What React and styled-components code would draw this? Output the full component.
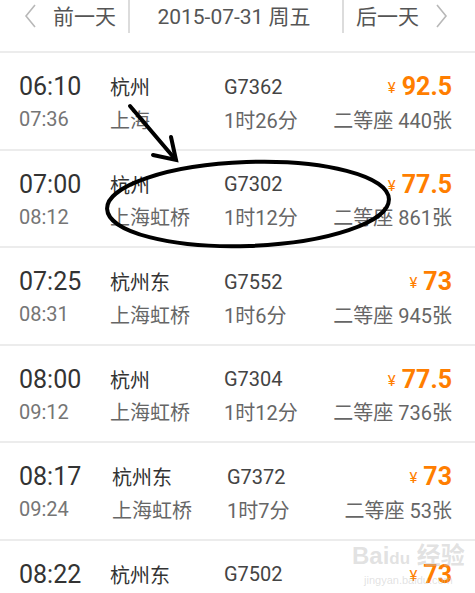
import React from "react";
import styled, { createGlobalStyle } from "styled-components";

const trains = [
  { dep: "06:10", arr: "07:36", from: "杭州", to: "上海", no: "G7362", dur: "1时26分", price: "92.5", seats: "440张" },
  { dep: "07:00", arr: "08:12", from: "杭州", to: "上海虹桥", no: "G7302", dur: "1时12分", price: "77.5", seats: "861张" },
  { dep: "07:25", arr: "08:31", from: "杭州东", to: "上海虹桥", no: "G7552", dur: "1时6分", price: "73", seats: "945张" },
  { dep: "08:00", arr: "09:12", from: "杭州", to: "上海虹桥", no: "G7304", dur: "1时12分", price: "77.5", seats: "736张" },
  { dep: "08:17", arr: "09:24", from: "杭州东", to: "上海虹桥", no: "G7372", dur: "1时7分", price: "73", seats: "53张", shift: true },
  { dep: "08:22", arr: "09:29", from: "杭州东", to: "上海虹桥", no: "G7502", dur: "1时7分", price: "73", seats: "60张" },
];

export default function App() {
  return (
    <Page>
      <GlobalStyle />
      <Header>
        <NavBar>
          <NavButton>
            <Chevron viewBox="0 0 12 24">
              <path d="M11 1 L2 12 L11 23" />
            </Chevron>
            前一天
          </NavButton>
          <DateLabel>2015-07-31 周五</DateLabel>
          <NavButton $right>
            后一天
            <Chevron viewBox="0 0 12 24">
              <path d="M1 1 L10 12 L1 23" />
            </Chevron>
          </NavButton>
        </NavBar>
      </Header>

      {trains.map((t) => (
        <Row key={t.no} $shift={t.shift}>
          <Time>{t.dep}</Time>
          <Station>{t.from}</Station>
          <TrainNo>{t.no}</TrainNo>
          <Price>
            <Yen>¥</Yen>
            {t.price}
          </Price>
          <SubTime>{t.arr}</SubTime>
          <SubText>{t.to}</SubText>
          <SubText>{t.dur}</SubText>
          <Seats>二等座 {t.seats}</Seats>
        </Row>
      ))}

      <Annotation viewBox="0 0 475 593">
        <line x1="130" y1="106" x2="175" y2="159" />
        <polyline points="171,137 176,160 153,155" />
        <ellipse cx="248" cy="204" rx="141" ry="42" transform="rotate(-2 248 204)" />
      </Annotation>

      <Watermark>
        <Logo>
          Bai<Paw>du</Paw> 经验
        </Logo>
        <Site>jingyan.baidu.com</Site>
      </Watermark>
    </Page>
  );
}

const GlobalStyle = createGlobalStyle`
  html, body {
    margin: 0;
    padding: 0;
    background: #fff;
  }
  body {
    font-family: Roboto, "Noto Sans CJK SC", sans-serif;
  }
`;

const Page = styled.div`
  position: relative;
  width: 475px;
  height: 593px;
  overflow: hidden;
  background: #fff;
`;

const Header = styled.div`
  height: 51px;
  border-bottom: 2px solid #ececec;
`;

const NavBar = styled.div`
  display: grid;
  grid-template-columns: 128px 214px 133px;
  height: 33px;
`;

const NavButton = styled.div`
  display: flex;
  align-items: center;
  gap: 17px;
  padding-left: ${(p) => (p.$right ? "12px" : "24px")};
  border-left: ${(p) => (p.$right ? "2px solid #dcdcdc" : "none")};
  font-size: 21px;
  color: #555;
  line-height: 30px;
`;

const Chevron = styled.svg`
  width: 12px;
  height: 24px;
  margin-top: -2px;
  fill: none;
  stroke: #b8b8b8;
  stroke-width: 1.6;
`;

const DateLabel = styled.div`
  display: flex;
  align-items: center;
  justify-content: center;
  border-left: 2px solid #dcdcdc;
  font-size: 21px;
  color: #555;
  line-height: 30px;
  padding-right: 4px;
`;

const Row = styled.div`
  display: grid;
  grid-template-columns: ${(p) => (p.$shift ? "93px 115px" : "91px 114px")} 1fr auto;
  grid-template-rows: 31px 34px;
  align-items: center;
  padding: 18px 23px 0 19px;
  box-sizing: border-box;
  height: 97.6px;
  border-bottom: 2px solid #ececec;
`;

const Time = styled.div`
  font-size: 25px;
  color: #333;
`;

const Station = styled.div`
  font-size: 20px;
  color: #333;
`;

const TrainNo = styled.div`
  font-size: 20px;
  color: #444;
`;

const Price = styled.div`
  justify-self: end;
  font-size: 25px;
  font-weight: bold;
  color: #ff7e00;
`;

const Yen = styled.span`
  font-size: 15px;
  font-weight: normal;
  margin-right: 6px;
  vertical-align: 2px;
`;

const SubTime = styled.div`
  font-size: 20px;
  color: #757575;
`;

const SubText = styled.div`
  font-size: 20px;
  color: #666;
`;

const Seats = styled(SubText)`
  justify-self: end;
`;

const Annotation = styled.svg`
  position: absolute;
  left: 0;
  top: 0;
  width: 475px;
  height: 593px;
  pointer-events: none;
  fill: none;
  stroke: #000;
  stroke-width: 4;
  stroke-linecap: round;
`;

const Watermark = styled.div`
  position: absolute;
  left: 352px;
  top: 542px;
  display: flex;
  flex-direction: column;
  align-items: center;
  color: rgba(190, 190, 190, 0.45);
  font-family: "Liberation Sans", "Noto Sans CJK SC", sans-serif;
`;

const Logo = styled.div`
  font-size: 24px;
  font-weight: bold;
  line-height: 28px;
`;

const Paw = styled.span`
  font-size: 17px;
`;

const Site = styled.div`
  font-size: 11px;
  line-height: 14px;
`;
